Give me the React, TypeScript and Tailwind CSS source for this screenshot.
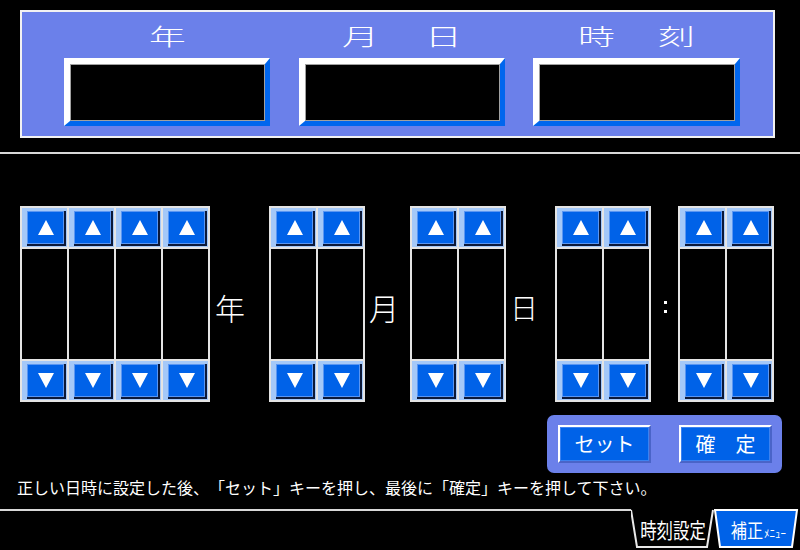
import React from "react";

const Tri = ({ down }: { down?: boolean }) => (
  <svg width="16" height="15" viewBox="0 0 16 15">
    {down ? (
      <polygon points="0,0 16,0 8,15" fill="#ffffff" />
    ) : (
      <polygon points="8,0 16,15 0,15" fill="#ffffff" />
    )}
  </svg>
);

const Btn = ({ down }: { down?: boolean }) => (
  <div className="h-[39px] bg-[#a4c8f8] pt-[3px] pl-[5px] pr-[1px] pb-[1px] flex">
    <div className="flex-1 flex border-r-2 border-b-2 border-[#0b1838]">
      <div className="flex-1 bg-[#0062e8] border border-[#5a96f2] flex items-center justify-center">
        <Tri down={down} />
      </div>
    </div>
  </div>
);

const Column = () => (
  <div className="w-[45px] flex flex-col gap-[2px]">
    <Btn />
    <div className="h-[110px] bg-black" />
    <Btn down />
  </div>
);

const Group = ({ n }: { n: number }) => (
  <div className="flex gap-[2px] p-[2px] bg-[#e4e4e4] h-[196px]">
    {Array.from({ length: n }).map((_, i) => (
      <Column key={i} />
    ))}
  </div>
);

const Field = ({ w }: { w: string }) => (
  <div
    className={`${w} h-[68px] border-t-[6px] border-l-[6px] border-r-[5px] border-b-[5px] border-t-white border-l-white border-r-[#0066ee] border-b-[#0066ee] flex`}
  >
    <div className="flex-1 bg-black border border-[#a0a0a0]" />
  </div>
);

const H = ({ c }: { c: string }) => (
  <span className="inline-block text-[23px] font-light leading-none text-white scale-x-[1.6]">{c}</span>
);

export default function App() {
  return (
    <div className="w-[800px] h-[550px] bg-black overflow-hidden flex flex-col font-['Noto_Sans_CJK_JP',sans-serif] text-white [text-spacing-trim:space-all]">
      {/* Top panel */}
      <div className="pt-[10px] pl-[20px]">
        <div className="w-[755px] h-[128px] border-2 border-[#f2f2f2] bg-[#6b80ea] pl-[42px] pt-[12px]">
          <div className="flex h-[23px]">
            <div className="w-[206px] flex justify-center">
              <H c="年" />
            </div>
            <div className="w-[206px] ml-[29px] flex justify-center gap-[60px]">
              <H c="月" />
              <H c="日" />
            </div>
            <div className="w-[207px] ml-[28px] flex justify-center gap-[57px]">
              <H c="時" />
              <H c="刻" />
            </div>
          </div>
          <div className="flex mt-[11px]">
            <Field w="w-[206px]" />
            <div className="w-[29px]" />
            <Field w="w-[206px]" />
            <div className="w-[28px]" />
            <Field w="w-[207px]" />
          </div>
        </div>
      </div>

      <div className="mt-[14px] h-[2px] bg-[#d8d8d8]" />

      {/* Spinners */}
      <div className="mt-[52px] pl-[20px] flex items-center">
        <Group n={4} />
        <div className="w-[59px] pl-[5px] text-[30px] font-light leading-none pt-[6px]">年</div>
        <Group n={2} />
        <div className="w-[45px] pl-[4px] text-[30px] font-light leading-none pt-[6px]">月</div>
        <Group n={2} />
        <div className="w-[49px] pl-[4px] text-[28px] font-light leading-none pt-[6px]">日</div>
        <Group n={2} />
        <div className="w-[27px] flex flex-col items-center gap-[6px] pt-[6px] pl-[1px]">
          <div className="w-[3px] h-[3px] bg-white" />
          <div className="w-[3px] h-[3px] bg-white" />
        </div>
        <Group n={2} />
      </div>

      {/* Button panel */}
      <div className="mt-[13px] flex justify-end pr-[18px]">
        <div className="w-[235px] h-[58px] rounded-[7px] bg-[#6b80ea] pl-[11px] pt-[10px] flex gap-[28px]">
          <div className="w-[93px] h-[38px] border-2 border-t-white border-l-white border-r-[#4a64c8] border-b-[#4a64c8] flex">
            <div className="flex-1 bg-[#0062e8] border border-[#3c82f0] flex items-center justify-center text-[20px] leading-none">
              セット
            </div>
          </div>
          <div className="w-[93px] h-[38px] border-2 border-t-white border-l-white border-r-[#4a64c8] border-b-[#4a64c8] flex">
            <div className="flex-1 bg-[#0062e8] border border-[#3c82f0] flex items-center justify-center text-[20px] leading-none">
              確　定
            </div>
          </div>
        </div>
      </div>

      {/* Instruction */}
      <div className="h-[36px] pt-[6px] pl-[17px] text-[16px] leading-[16px] whitespace-nowrap">
        正しい日時に設定した後、「セット」キーを押し、最後に「確定」キーを押して下さい。
      </div>

      {/* Bottom tabs */}
      <div className="flex h-[41px]">
        <div className="w-[631px] h-[2px] bg-[#d8d8d8]" />
        <div className="relative w-[83px] h-[41px] flex items-center justify-center">
          <svg className="absolute inset-0" width="83" height="41" viewBox="0 0 83 41">
            <polyline points="0,1 6,38 76,38 82,1" fill="#000" stroke="#e8e8e8" strokeWidth="2" />
          </svg>
          <span className="relative inline-block text-[21px] leading-none scale-x-[0.78] whitespace-nowrap">
            時刻設定
          </span>
        </div>
        <div className="relative w-[86px] h-[41px] flex items-center justify-center">
          <svg className="absolute inset-0" width="86" height="41" viewBox="0 0 86 41">
            <polygon points="1,1 6,38 78,38 83,1" fill="#0062e8" stroke="#ffffff" strokeWidth="2" />
          </svg>
          <span className="relative whitespace-nowrap leading-none flex items-end">
            <span className="text-[19px] inline-block scale-x-[0.85] -mr-[2px]">補正</span>
            <span className="text-[11px] inline-block">ﾒﾆｭｰ</span>
          </span>
        </div>
      </div>
    </div>
  );
}
